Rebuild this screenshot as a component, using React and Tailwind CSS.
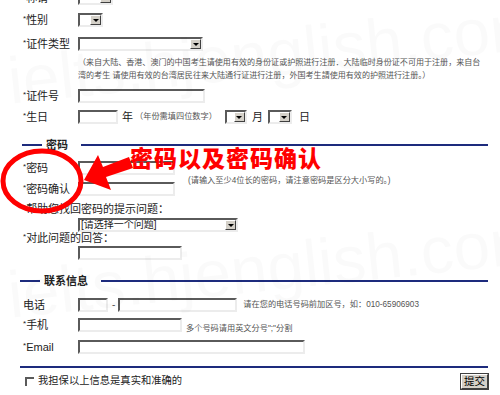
import React from "react";

const inset =
  "border-2 border-t-[#5a5a5a] border-l-[#5a5a5a] border-r-[#ececec] border-b-[#ececec] bg-white";

function Input({ className = "" }) {
  return <div className={`h-[14px] shrink-0 ${inset} ${className}`} />;
}

function Select({ className = "", children }) {
  return (
    <div className={`flex h-[14px] shrink-0 items-stretch justify-between ${inset} ${className}`}>
      <span className="truncate pl-[1px] text-[10px] leading-[10px] text-[#222]">{children}</span>
      <span className="flex w-[11px] shrink-0 items-center justify-center border border-t-white border-l-white border-r-[#404040] border-b-[#404040] bg-[#d4d0c8]">
        <span className="h-0 w-0 border-x-[3px] border-t-[3px] border-x-transparent border-t-black" />
      </span>
    </div>
  );
}

function Label({ children, req = true, className = "w-[55px]" }) {
  return (
    <span className={`shrink-0 whitespace-nowrap text-[11px] leading-none text-[#222] ${className}`}>
      {req && <span className="align-top text-[8px]">*</span>}
      {children}
    </span>
  );
}

function Note({ children, className = "" }) {
  return (
    <span className={`whitespace-nowrap text-[8.2px] leading-none text-[#555] ${className}`}>
      {children}
    </span>
  );
}

function SectionHead({ title, gap }) {
  return (
    <div className="flex h-[12px] items-center">
      <span className="h-[2px] w-[20px] bg-[#1d2b7d]" />
      <span className="ml-[4px] text-[11px] font-bold leading-none text-[#222]">{title}</span>
      <span className={`h-[2px] flex-1 bg-[#1d2b7d] ${gap}`} />
    </div>
  );
}

export default function App() {
  return (
    <div className="relative h-[395px] w-[500px] overflow-hidden bg-white font-['Liberation_Sans','Noto_Sans_CJK_SC',sans-serif]">
      <div className="flex flex-col pl-[22px] pr-[12px]">
        <div className="-mt-[9px] flex h-[14px] items-center pl-[1px]">
          <Label>称谓</Label>
          <Select className="w-[35px]" />
        </div>
        <div className="mt-[8px] flex h-[14px] items-center pl-[1px]">
          <Label>性别</Label>
          <Select className="w-[25px]" />
        </div>
        <div className="mt-[10px] flex h-[14px] items-center pl-[1px]">
          <Label>证件类型</Label>
          <Select className="w-[125px]" />
        </div>
        <div className="mt-[5px] flex flex-col pl-[56px] text-[8.05px] leading-[13px] text-[#555]">
          <span className="whitespace-nowrap">（来自大陆、香港、澳门的中国考生请使用有效的身份证或护照进行注册．大陆临时身份证不可用于注册，来自台</span>
          <span className="whitespace-nowrap">湾的考生 请使用有效的台湾居民往来大陆通行证进行注册，外国考生請使用有效的护照进行注册。）</span>
        </div>
        <div className="mt-[7px] flex h-[14px] items-center pl-[1px]">
          <Label>证件号</Label>
          <Input className="w-[127px]" />
        </div>
        <div className="mt-[7px] flex h-[14px] items-center pl-[1px]">
          <Label>生日</Label>
          <Input className="w-[40px]" />
          <span className="ml-[4px] text-[11px] leading-none text-[#222]">年</span>
          <Note className="ml-[2px]">（年份需填四位数字）</Note>
          <Select className="ml-[8px] w-[22px]" />
          <span className="ml-[5px] text-[11px] leading-none text-[#222]">月</span>
          <Select className="ml-[5px] w-[24px]" />
          <span className="ml-[7px] text-[11px] leading-none text-[#222]">日</span>
        </div>

        <div className="mt-[15px]">
          <SectionHead title="密码" gap="ml-[13px]" />
        </div>

        <div className="mt-[10px] flex h-[14px] items-center pl-[1px]">
          <Label>密码</Label>
          <Input className="w-[97px]" />
        </div>
        <div className="mt-[7px] flex h-[14px] items-center pl-[1px]">
          <Label>密码确认</Label>
          <Input className="w-[97px]" />
          <Note className="-mt-[16px] ml-[13px]">(请输入至少4位长的密码，请注意密码是区分大小写的。)</Note>
        </div>
        <div className="mt-[7px] flex h-[12px] items-center pl-[1px]">
          <Label className="">帮助您找回密码的提示问题：</Label>
        </div>
        <div className="mt-[3px] flex h-[14px] items-center pl-[56px]">
          <Select className="w-[160px]">[请选择一个问题]</Select>
        </div>
        <div className="flex h-[12px] items-center pl-[1px]">
          <Label className="">对此问题的回答：</Label>
        </div>
        <div className="mt-[2px] flex h-[14px] items-center pl-[56px]">
          <Input className="w-[104px]" />
        </div>

        <div className="mt-[15px] -ml-[2px]">
          <SectionHead title="联系信息" gap="ml-[13px]" />
        </div>

        <div className="mt-[11px] flex h-[14px] items-center pl-[1px]">
          <Label req={false}>电话</Label>
          <Input className="w-[30px]" />
          <span className="ml-[4px] text-[10px] leading-none text-[#555]">-</span>
          <Input className="ml-[3px] w-[119px]" />
          <Note className="ml-[6px]">请在您的电话号码前加区号，如：010-65906903</Note>
        </div>
        <div className="mt-[6px] flex h-[14px] items-center pl-[1px]">
          <Label>手机</Label>
          <Input className="w-[104px]" />
          <Note className="mt-[8px] ml-[4px]">多个号码请用英文分号";"分割</Note>
        </div>
        <div className="mt-[8px] flex h-[14px] items-center pl-[1px]">
          <Label>Email</Label>
          <Input className="w-[227px]" />
        </div>

        <div className="mt-[12px] -ml-[2px] h-[2px] bg-[#1d2b7d]" />

        <div className="mt-[6px] flex h-[15px] items-center">
          <span className="ml-[3px] h-[9px] w-[9px] border-t-2 border-l-2 border-t-[#5a5a5a] border-l-[#5a5a5a] bg-white" />
          <span className="ml-[4px] text-[10.3px] leading-none text-[#222]">我担保以上信息是真实和准确的</span>
          <button className="ml-auto flex h-[15px] w-[27px] items-center justify-center border border-t-white border-l-white border-r-[#404040] border-b-[#404040] bg-[#d4d0c8] text-[10.5px] leading-none text-black outline outline-1 outline-[#404040]">
            提交
          </button>
        </div>
      </div>

      {/* watermark */}
      <div className="pointer-events-none absolute inset-0 select-none">
        <span className="absolute left-[8px] top-[48px] origin-left -rotate-6 whitespace-nowrap font-['Liberation_Sans',sans-serif] text-[66px] font-light leading-none text-black/[0.018]">
          ielts.hjenglish.com
        </span>
        <span className="absolute left-[8px] top-[262px] origin-left -rotate-6 whitespace-nowrap font-['Liberation_Sans',sans-serif] text-[66px] font-light leading-none text-black/[0.018]">
          ielts.hjenglish.com
        </span>
      </div>

      {/* annotation */}
      <svg className="pointer-events-none absolute left-0 top-0" width="500" height="395">
        <ellipse cx="42" cy="181" rx="39" ry="30" fill="none" stroke="#ff0000" strokeWidth="5" />
        <polygon
          points="84,180 98,155 103,167 129,157 133,168 106,177 111,190"
          fill="#ff0000"
        />
      </svg>
      <span className="absolute left-[130px] top-[146px] whitespace-nowrap font-['Noto_Sans_CJK_SC',sans-serif] text-[23px] font-black leading-none tracking-[1px] text-[#ff0000]">
        密码以及密码确认
      </span>
    </div>
  );
}
